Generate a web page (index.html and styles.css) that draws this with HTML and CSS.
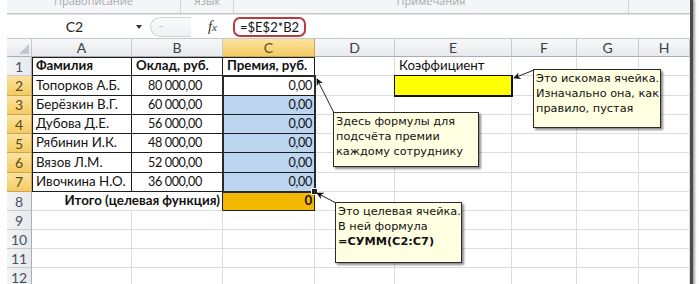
FILE: index.html
```html
<!DOCTYPE html>
<html lang="ru">
<head>
<meta charset="utf-8">
<title>Поиск решения</title>
<link rel="stylesheet" href="styles.css">
</head>
<body>
<div class="win">
  <div class="ribbon">
    <div class="grp g1"><span>Правописание</span></div>
    <div class="grp g2"><span>Язык</span></div>
    <div class="grp g3"><span>Примечания</span></div>
    <div class="grp g4"><span>Изменения</span></div>
  </div>
  <div class="fbar">
    <div class="namebox"><span class="nb-text">C2</span><span class="nb-arrow"></span></div>
    <div class="btns"><span class="dot"></span></div>
    <div class="fx"><i>f</i><span>x</span></div>
    <div class="finput"><span class="formula">=$E$2*B2</span></div>
  </div>
  <div class="sheetwrap">
    <div class="sheet">
      <!-- column headers -->
      <div class="ch corner"><span class="tri"></span></div>
      <div class="ch">A</div>
      <div class="ch">B</div>
      <div class="ch sel">C</div>
      <div class="ch">D</div>
      <div class="ch">E</div>
      <div class="ch">F</div>
      <div class="ch">G</div>
      <div class="ch">H</div>

      <!-- row 1 -->
      <div class="rh">1</div>
      <div class="c b bold l top">Фамилия</div>
      <div class="c b bold top">Оклад, руб.</div>
      <div class="c b bold top">Премия, руб.</div>
      <div class="c"></div>
      <div class="c">Коэффициент</div>
      <div class="c"></div><div class="c"></div><div class="c"></div>

      <!-- row 2 -->
      <div class="rh sel">2</div>
      <div class="c b l">Топорков А.Б.</div>
      <div class="c b num">80 000,00</div>
      <div class="c b val">0,00</div>
      <div class="c"></div>
      <div class="c e2"></div>
      <div class="c"></div><div class="c"></div><div class="c"></div>

      <!-- row 3 -->
      <div class="rh sel">3</div>
      <div class="c b l">Берёзкин В.Г.</div>
      <div class="c b num">60 000,00</div>
      <div class="c b val hl">0,00</div>
      <div class="c"></div><div class="c"></div>
      <div class="c"></div><div class="c"></div><div class="c"></div>

      <!-- row 4 -->
      <div class="rh sel">4</div>
      <div class="c b l">Дубова Д.Е.</div>
      <div class="c b num">56 000,00</div>
      <div class="c b val hl">0,00</div>
      <div class="c"></div><div class="c"></div>
      <div class="c"></div><div class="c"></div><div class="c"></div>

      <!-- row 5 -->
      <div class="rh sel">5</div>
      <div class="c b l">Рябинин И.К.</div>
      <div class="c b num">48 000,00</div>
      <div class="c b val hl">0,00</div>
      <div class="c"></div><div class="c"></div>
      <div class="c"></div><div class="c"></div><div class="c"></div>

      <!-- row 6 -->
      <div class="rh sel">6</div>
      <div class="c b l">Вязов Л.М.</div>
      <div class="c b num">52 000,00</div>
      <div class="c b val hl">0,00</div>
      <div class="c"></div><div class="c"></div>
      <div class="c"></div><div class="c"></div><div class="c"></div>

      <!-- row 7 -->
      <div class="rh sel">7</div>
      <div class="c b l">Ивочкина Н.О.</div>
      <div class="c b num">36 000,00</div>
      <div class="c b val hl">0,00</div>
      <div class="c"></div><div class="c"></div>
      <div class="c"></div><div class="c"></div><div class="c"></div>

      <!-- row 8 -->
      <div class="rh">8</div>
      <div class="c bold total">Итого (целевая функция)</div>
      <div class="c b val bold target">0</div>
      <div class="c"></div><div class="c"></div>
      <div class="c"></div><div class="c"></div><div class="c"></div>

      <!-- rows 9-12 -->
      <div class="rh">9</div>
      <div class="c"></div><div class="c"></div><div class="c"></div><div class="c"></div><div class="c"></div><div class="c"></div><div class="c"></div><div class="c"></div>
      <div class="rh">10</div>
      <div class="c"></div><div class="c"></div><div class="c"></div><div class="c"></div><div class="c"></div><div class="c"></div><div class="c"></div><div class="c"></div>
      <div class="rh">11</div>
      <div class="c"></div><div class="c"></div><div class="c"></div><div class="c"></div><div class="c"></div><div class="c"></div><div class="c"></div><div class="c"></div>
      <div class="rh">12</div>
      <div class="c"></div><div class="c"></div><div class="c"></div><div class="c"></div><div class="c"></div><div class="c"></div><div class="c"></div><div class="c"></div>
    </div>
    <!-- selection frame C2:C7, on a grid with the same tracks -->
    <div class="sheet-over">
      <div class="selection"><span class="handle"></span></div>
    </div>
  </div>

  <!-- comments -->
  <svg class="arrows" width="700" height="284" viewBox="0 0 700 284">
    <defs>
      <marker id="ah" viewBox="0 0 10 10" refX="9" refY="5" markerWidth="7" markerHeight="7" orient="auto">
        <path d="M0 0 L10 5 L0 10 L3 5 Z" fill="#111"/>
      </marker>
    </defs>
    <line x1="534" y1="70" x2="514" y2="78" stroke="#222" stroke-width="1" marker-end="url(#ah)"/>
    <line x1="334" y1="113" x2="317" y2="79" stroke="#222" stroke-width="1" marker-end="url(#ah)"/>
    <line x1="336" y1="203" x2="317" y2="193" stroke="#222" stroke-width="1" marker-end="url(#ah)"/>
  </svg>
  <div class="note n1">Это искомая ячейка.<br>Изначально она, как<br>правило, пустая</div>
  <div class="note n2">Здесь формулы для<br>подсчёта премии<br>каждому сотруднику</div>
  <div class="note n3">Это целевая ячейка.<br>В ней формула<br><b>=СУММ(С2:С7)</b></div>
</div>
</body>
</html>
```
FILE: styles.css
```css
html, body {
  margin: 0;
  padding: 0;
  background: #fff;
}
body {
  width: 700px;
  height: 284px;
  overflow: hidden;
  font-family: Lato, "Noto Sans", sans-serif;
}
.win {
  position: relative;
  margin-left: 7px;
  width: 683px;
  height: 300px;
  border-right: 3px solid #4a4a4a;
  box-shadow: 2px 0 2px rgba(0,0,0,0.35);
  background: #fff;
}

/* ribbon strip */
.ribbon {
  height: 13px;
  display: flex;
  background: #f4f5f7;
  border-bottom: 1px solid #c3c6ca;
  overflow: hidden;
}
.grp {
  display: flex;
  justify-content: center;
  border-right: 1px solid #d2d4d8;
  font: 11px "Open Sans", sans-serif;
  color: #a4a8ae;
}
.grp span { margin-top: -7px; }
.g1 { width: 183px; }
.g2 { width: 55px; }
.g3 { width: 417px; }
.g4 { flex: 1; border-right: 0; }
.g4 span { visibility: hidden; }

/* formula bar */
.fbar {
  height: 23px;
  display: flex;
  align-items: center;
  border-top: 1px solid #e1e3e6;
  border-bottom: 1px solid #c4c7cb;
  background: #fff;
}
.namebox {
  width: 143px;
  height: 100%;
  display: flex;
  align-items: center;
}
.nb-text {
  flex: 1;
  text-align: center;
  font-size: 14px;
  color: #222;
  padding-left: 6px;
}
.nb-arrow {
  width: 0; height: 0;
  border-left: 3px solid transparent;
  border-right: 3px solid transparent;
  border-top: 4px solid #333;
  margin-right: 8px;
}
.btns {
  width: 40px;
  height: 18px;
  border: 1px solid #cfd2d6;
  border-right: 0;
  border-radius: 10px 0 0 10px;
  background: linear-gradient(#fbfbfc, #eef0f2);
  display: flex;
  align-items: center;
}
.dot {
  width: 4px; height: 1px;
  background: #c0c4c8;
  margin-left: 8px;
}
.fx {
  width: 40px;
  text-align: right;
  padding-right: 14px;
  font-family: "Liberation Serif", serif;
  color: #333;
  font-size: 15px;
  box-sizing: border-box;
}
.fx i { font-style: italic; }
.fx span { font-style: italic; font-size: 11px; }
.finput {
  flex: 1;
  height: 100%;
  display: flex;
  align-items: center;
  padding-left: 2px;
}
.formula {
  border: 2px solid #b83a3c;
  border-radius: 7px;
  height: 16px;
  line-height: 16px;
  padding: 0 5px 0 5px;
  font-size: 13px;
  color: #111;
}

/* sheet grid */
.sheetwrap {
  display: grid;
}
.sheet, .sheet-over {
  grid-area: 1 / 1;
  display: grid;
  grid-template-columns: 25px 100px 91px 92px 80px 117px 65px 62px 51px;
  grid-template-rows: 18px repeat(7, 19.3px) repeat(5, 19px);
}
.sheet {
  font-size: 13.3px;
  color: #111;
}
.sheet-over {
  pointer-events: none;
  z-index: 3;
}
.ch, .rh, .c {
  box-sizing: border-box;
  border-right: 1px solid #dadcdf;
  border-bottom: 1px solid #dadcdf;
  white-space: nowrap;
  overflow: hidden;
}
.ch {
  background: linear-gradient(#f7f8f9, #e7e9ec);
  border-right-color: #c6c9cd;
  border-bottom-color: #a9aeb4;
  color: #3b3f44;
  font-size: 14px;
  display: flex;
  align-items: center;
  justify-content: center;
}
.ch.sel, .rh.sel {
  background: linear-gradient(#fbe3a0, #f4cb61);
  border-right-color: #c9a55a;
  border-bottom-color: #c9a55a;
  color: #5b4a20;
}
.corner { position: relative; }
.tri {
  position: absolute;
  right: 2px; bottom: 2px;
  width: 0; height: 0;
  border-left: 10px solid transparent;
  border-bottom: 10px solid #c3c7cc;
}
.rh {
  background: linear-gradient(90deg, #f3f4f6, #e7e9ec);
  border-right-color: #a9aeb4;
  border-bottom-color: #c6c9cd;
  color: #4a5260;
  font-size: 14px;
  display: flex;
  align-items: center;
  justify-content: center;
}
.c {
  display: flex;
  align-items: flex-end;
  padding: 0 0 1px 4px;
  line-height: 17px;
}
.c.b {
  border-right-color: #1d1d1d;
  border-bottom-color: #1d1d1d;
}
.c.l { box-shadow: inset 1px 0 0 #1d1d1d; }
.c.top { box-shadow: inset 0 1px 0 #1d1d1d; }
.c.l.top { box-shadow: inset 1px 1px 0 #1d1d1d; }
.bold { font-weight: 700; }
.num {
  justify-content: flex-end;
  padding-right: 20px;
  font-size: 12.6px;
  letter-spacing: -0.35px;
}
.val {
  justify-content: flex-end;
  padding-right: 2px;
  font-size: 12.6px;
  letter-spacing: -0.3px;
}
.hl { background: #bcd5f0; }
.total {
  grid-column: 2 / 4;
  justify-content: flex-end;
  padding-right: 2px;
  border-right-color: #1d1d1d;
}
.target { background: #f5b800; font-size: 13.3px; }
.e2 {
  background: #ffff00;
  position: relative;
  z-index: 2;
  border-color: #111;
  box-shadow: 0 0 0 1px #111;
}

.selection {
  grid-column: 4;
  grid-row: 3 / 9;
  margin: -1px;
  border: 2px solid #2a2a2a;
  position: relative;
}
.handle {
  position: absolute;
  right: -4px;
  bottom: -4px;
  width: 5px;
  height: 5px;
  background: #222;
  border: 1px solid #fff;
}

/* comments */
.arrows {
  position: absolute;
  left: -7px;
  top: 0;
  z-index: 5;
  pointer-events: none;
}
.note {
  position: absolute;
  z-index: 6;
  box-sizing: border-box;
  background: #ffffe1;
  border: 1px solid #2a2a2a;
  box-shadow: 2px 2px 2px rgba(0,0,0,0.45);
  font: 11.3px/15px "DejaVu Sans", sans-serif;
  color: #111;
  padding: 1px 0 0 2px;
  white-space: nowrap;
}
.note b { font-weight: 700; }
.n1 { left: 526px; top: 69px; width: 128px; height: 59px; }
.n2 { left: 326px; top: 112px; width: 146px; height: 55px; }
.n3 { left: 328px; top: 202px; width: 127px; height: 61px; }
```
